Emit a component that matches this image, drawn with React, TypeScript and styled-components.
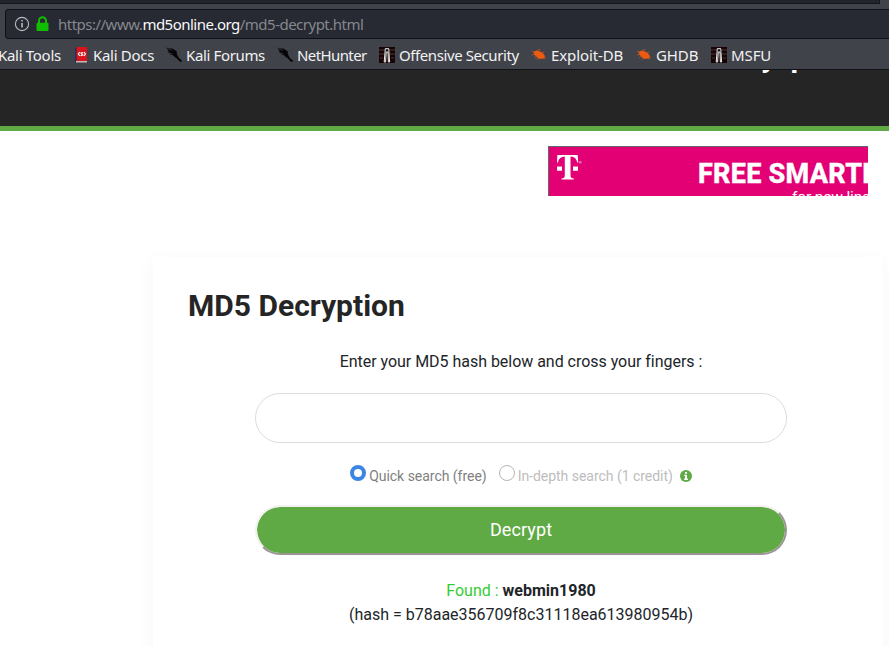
import React from "react";
import styled, { createGlobalStyle, css } from "styled-components";

const Global = createGlobalStyle`
  * { box-sizing: border-box; }
  html, body { margin: 0; background: #fff; overflow: hidden; }
`;
const Screen = styled.div`
  width: 889px; height: 646px; overflow: hidden;
  display: flex; flex-direction: column;
  font-family: Roboto, sans-serif; color: #212529; background: #fff;
`;
const Chrome = styled.header`
  height: 70px; flex: none; background: #40434a; border-bottom: 1px solid #101114;
  font-family: "Noto Sans", sans-serif; overflow: hidden;
`;
const TabStrip = styled.div`
  height: 4px; width: 880px; background: #23252e;
  border-bottom: 1px solid #15161b; border-right: 1px solid #15161b;
`;
const AddressBar = styled.div`
  margin: 5px 0 0 5px; width: 900px; height: 30px; display: flex; align-items: center;
  padding-left: 8px; border: 1px solid #101116; border-radius: 3px; background: #272933;
`;
const LockSlot = styled.span`display: flex; width: 13px; margin: 0 9px 0 6px;`;
const Url = styled.span`
  font-size: 15px; line-height: 20px; color: #85888d; white-space: nowrap; letter-spacing: -0.51px;
  b { font-weight: 400; color: #f9f9fa; }
`;
const Bookmarks = styled.nav`height: 30px; display: flex; padding-top: 2px; margin-left: -2px;`;
const Bookmark = styled.a<{ $w: number; $gap?: number; $track?: number }>`
  width: ${(p) => p.$w}px; flex: none; display: flex; align-items: center;
  gap: ${(p) => p.$gap ?? 4}px; height: 28px; color: #f2f2f2; font-size: 15px;
  line-height: 20px; white-space: nowrap; letter-spacing: ${(p) => p.$track ?? -0.1}px;
  svg { flex: none; }
`;
const SiteHeader = styled.div`
  height: 61px; flex: none; background: #252525; border-bottom: 5px solid #60aa45; overflow: hidden;
`;
const SiteTitle = styled.div`
  margin: -33px 0 0 761px; height: 40px; color: #fff; font-weight: 700;
  font-size: 30px; line-height: 40px; word-spacing: 7px; white-space: nowrap;
`;
const Ad = styled.div`
  margin: 15px 0 0 548px; width: 320px; height: 50px; flex: none; overflow: hidden;
  display: flex; background: #e20074; color: #fff;
  border-top: 1px solid #666; border-left: 1px solid #666;
`;
const AdLogo = styled.div`width: 149px; flex: none; padding: 8px 0 0 8px;`;
const AdCopy = styled.div`white-space: nowrap; padding-top: 13px;`;
const AdHeadline = styled.div`
  font-weight: 800; font-size: 27px; line-height: 28px; letter-spacing: 0.25px;
  -webkit-text-stroke: 0.3px #fff;
`;
const AdSub = styled.div`padding-left: 94px; font-size: 15.5px; line-height: 18px; letter-spacing: -0.15px;`;
const Card = styled.main`
  margin: 61px 0 0 153px; width: 730px; height: 420px; flex: none;
  display: flex; flex-direction: column; padding: 29px 35px 0; background: #fff;
  box-shadow: 0 5px 20px rgba(0, 0, 0, 0.04);
`;
const Heading = styled.h1`margin: 0; font-size: 30px; line-height: 40px; font-weight: 700; color: #252525;`;
const Form = styled.form`display: flex; flex-direction: column; align-items: center; width: 666px;`;
const Line = styled.p`margin: 0; font-size: 16px; line-height: 24px; text-align: center; white-space: nowrap;`;
const Prompt = styled(Line)`margin-top: 24px; letter-spacing: -0.03px;`;
const HashInput = styled.input`
  width: 532px; height: 50px; margin: 19px 0 0; padding: 0 24px; font: 16px Roboto, sans-serif;
  border: 1px solid #dcdcdc; border-radius: 25px; background: #fff; outline: none;
`;
const Options = styled.div`
  display: flex; height: 24px; margin: 20px 0 0; font-size: 14px; line-height: 26px;
  white-space: nowrap; letter-spacing: -0.03px;
`;
const Option = styled.label<{ $muted?: boolean }>`
  display: flex; gap: 3px; color: ${(p) => (p.$muted ? "#bdbdbd" : "#808080")};
  margin-right: ${(p) => (p.$muted ? 7 : 12)}px;
`;
const Radio = styled.span<{ $on?: boolean }>`
  width: 16px; height: 16px; margin-top: 2px; border-radius: 50%; background: #fff;
  ${(p) => (p.$on ? css`border: 4px solid #3b86e4;` : css`border: 1px solid #bab5b0;`)}
`;
const InfoSlot = styled.span`display: flex; padding-top: 7px;`;
const Submit = styled.button`
  width: 532px; height: 50px; margin: 18px 0 0; padding: 0 0 2px; border-radius: 25px;
  border: 2px solid; border-color: #f4f2f1 #9b9694 #9b9694 #f4f2f1;
  background: #60aa45; background-clip: padding-box;
  color: #fff; font: 18px Roboto, sans-serif; letter-spacing: 0.1px;
`;
const Result = styled.div`
  margin-top: 24px;
  em { font-style: normal; color: #32cd32; }
`;

const Info = () => (
  <svg width="16" height="16" viewBox="0 0 16 16" fill="none" stroke="#b9bbbf">
    <circle cx="8" cy="8" r="6.6" strokeWidth="1.1" />
    <path d="M8 7v4.5M8 4v1.6" strokeWidth="1.6" />
  </svg>
);
const Lock = () => (
  <svg width="13" height="16" viewBox="0 0 13 16">
    <path d="M3 8V4.7a3.5 3.5 0 0 1 7 0V8" fill="none" stroke="#12bc00" strokeWidth="2" />
    <rect x="0.5" y="6.7" width="12" height="8.3" rx="1" fill="#12bc00" />
  </svg>
);
const Docs = () => (
  <svg width="13" height="16" viewBox="0 0 13 16">
    <path d="M0 1 2 0V15L0 15.5z" fill="#1d2f63" />
    <path d="M1 14h11v1.5H1z" fill="#c9b9bb" />
    <path d="M1.5 0H12v14H1.5z" fill="#d9141b" />
    <path d="M4.8 5.2 3.3 7l1.5 1.8M9 5.2 10.5 7 9 8.8M8.2 5.6 6 6l1.8 2-2.2.6" fill="none" stroke="#fff" strokeWidth="1.1" />
  </svg>
);
const Dragon = () => (
  <svg width="16" height="16" viewBox="0 0 16 16">
    <path d="M0 .5l2.5.7 4.5.6 1.5 1.3L10.5 4l.5 3.2 1 2.3 1.2 1.7 2.8 2.3-.8 1.5-1.6-.6-1.3-1.4-1.6-1.8-2.3-1.5L7 8.3 4.5 7.6 3.6 5.9 2 5.5l1-.8L1.3 3.6l1.2-.8z" fill="#050505" />
    <path d="M2 1.8l4 1.6M3.5 6l3 1" stroke="#55585d" strokeWidth=".5" />
  </svg>
);
const Tower = () => (
  <svg width="16" height="16" viewBox="0 0 16 16">
    <path d="M0 0h16v16H0z" fill="#170506" />
    <path d="M0 3h5M11 3h5M0 7h5M11 7h5M1 11h3M12 11h3" stroke="#3b2627" strokeWidth="1.5" />
    <path d="M6.2 1.7h3.6l.2 4 .6 9.3H9.4L9 5H7.2L6.6 15H5.2l.8-9.3z" fill="#111" stroke="#eee" strokeWidth="1" />
  </svg>
);
const Bug = () => (
  <svg width="16" height="16" viewBox="0 0 16 16">
    <path d="M3 4.6 6 3.6l3 .8 2.8 1.9 2 2.5-.5 1.8 1 1.5-2.8-.7-2.5.5-2.8-1.4L3.6 8 2.6 6z" fill="#ed5b10" />
    <path d="M1 4.2l2.5 1M6 4l1.5-1.5 2 .5M11 5.6l2.2-.4M3.6 7.2 1 8.2M5.5 9l-2.4 2M8 11l-2.4 1.4M13 9.5l1.8.8" fill="none" stroke="#c45424" strokeWidth=".8" />
  </svg>
);
const TMobile = () => (
  <svg width="27" height="26" viewBox="0 0 27 26" fill="#fff">
    <path d="M.3 0h20.4l.5 7.5h-1C19.6 4 17.5 1.6 13.5 1.5V20c0 2.7 1 3.3 3.3 3.4v1H4.5v-1C6.8 23.3 7.8 22.7 7.8 20V1.5C4 1.6 1.5 4 1 7.5H0zM0 11.4h5v4.4H0zM16 11.4h5v4.4h-5z" />
    <circle cx="23.3" cy="7.3" r="1.3" fill="#ef71b0" />
  </svg>
);
const InfoDot = () => (
  <svg width="12" height="12" viewBox="0 0 12 12">
    <circle cx="6" cy="6" r="6" fill="#60aa45" />
    <path d="M5 2h2v1.8H5zM4.2 4.8H7v3.8h.9V10H4.2V8.6H5V6.1h-.8z" fill="#fff" />
  </svg>
);

export default function App() {
  return (
    <Screen>
      <Global />
      <Chrome>
        <TabStrip />
        <AddressBar>
          <Info />
          <LockSlot><Lock /></LockSlot>
          <Url>https://www.<b>md5online.org</b>/md5-decrypt.html</Url>
        </AddressBar>
        <Bookmarks>
          <Bookmark $w={77} $track={-0.3}>Kali Tools</Bookmark>
          <Bookmark $w={91} $gap={5} $track={-0.3}><Docs />Kali Docs</Bookmark>
          <Bookmark $w={111} $track={-0.36}><Dragon />Kali Forums</Bookmark>
          <Bookmark $w={102} $track={-0.6}><Dragon />NetHunter</Bookmark>
          <Bookmark $w={152} $track={-0.41}><Tower />Offensive Security</Bookmark>
          <Bookmark $w={105}><Bug />Exploit-DB</Bookmark>
          <Bookmark $w={75}><Bug />GHDB</Bookmark>
          <Bookmark $w={80}><Tower />MSFU</Bookmark>
        </Bookmarks>
      </Chrome>
      <SiteHeader><SiteTitle>y p</SiteTitle></SiteHeader>
      <Ad>
        <AdLogo><TMobile /></AdLogo>
        <AdCopy>
          <AdHeadline>FREE SMARTPHONE</AdHeadline>
          <AdSub>for new lines</AdSub>
        </AdCopy>
      </Ad>
      <Card>
        <Heading>MD5 Decryption</Heading>
        <Form>
          <Prompt>Enter your MD5 hash below and cross your fingers :</Prompt>
          <HashInput />
          <Options>
            <Option><Radio $on />Quick search (free)</Option>
            <Option $muted><Radio />In-depth search (1 credit)</Option>
            <InfoSlot><InfoDot /></InfoSlot>
          </Options>
          <Submit type="button">Decrypt</Submit>
          <Result>
            <Line><em>Found :</em> <b>webmin1980</b></Line>
            <Line>(hash = b78aae356709f8c31118ea613980954b)</Line>
          </Result>
        </Form>
      </Card>
    </Screen>
  );
}
